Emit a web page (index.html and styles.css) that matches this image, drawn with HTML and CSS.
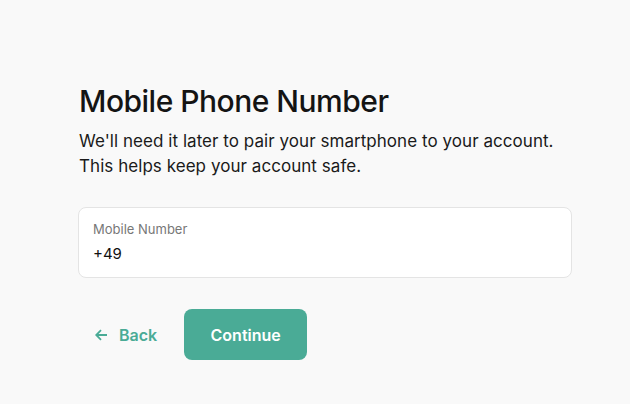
FILE: index.html
```html
<!DOCTYPE html>
<html>
<head>
<meta charset="utf-8">
<link rel="stylesheet" href="styles.css">
</head>
<body>
<main class="page">
  <h1 class="title">Mobile Phone Number</h1>
  <p class="lead">We'll need it later to pair your smartphone to your account.<br>This helps keep your account safe.</p>
  <div class="field">
    <span class="label">Mobile Number</span>
    <span class="value">+49</span>
  </div>
  <div class="actions">
    <button class="back"><svg width="13" height="12" viewBox="0 0 13 12"><path d="M12 6H1.5M6 1.2 1.2 6 6 10.8" fill="none" stroke="currentColor" stroke-width="1.8"/></svg>Back</button>
    <button class="continue">Continue</button>
  </div>
</main>
</body>
</html>
```
FILE: styles.css
```css
html, body { margin: 0; padding: 0; }
body {
  background: #f9f9f9;
  font-family: Inter, "Liberation Sans", sans-serif;
  color: #141414;
}
.page {
  padding: 83px 58px 0 79px;
  display: flex;
  flex-direction: column;
}
.title {
  margin: 0;
  font-size: 30px;
  font-weight: 500;
  line-height: 36px;
  letter-spacing: -0.5px;
}
.lead {
  margin: 10px 0 0;
  font-size: 17px;
  line-height: 25px;
  letter-spacing: 0.05px;
  color: #1a1a1a;
}
.field {
  margin: 28px 0 0 -1px;
  height: 71px;
  box-sizing: border-box;
  background: #fff;
  border: 1px solid #e4e4e4;
  border-radius: 8px;
  padding: 12px 14px;
  display: flex;
  flex-direction: column;
  gap: 5px;
}
.label { font-size: 13px; line-height: 18px; color: #777; }
.value { font-size: 15px; line-height: 22px; color: #111; }
.actions {
  margin-top: 31px;
  display: flex;
  align-items: center;
}
.back, .continue {
  font-family: inherit;
  font-size: 16px;
  font-weight: 600;
  border: 0;
  cursor: pointer;
}
.back {
  background: none;
  color: #4aab96;
  display: flex;
  align-items: center;
  gap: 11px;
  padding: 0 27px 0 16px;
  height: 51px;
}
.continue {
  background: #4aab96;
  color: #fff;
  width: 123px;
  height: 51px;
  border-radius: 8px;
}
```
